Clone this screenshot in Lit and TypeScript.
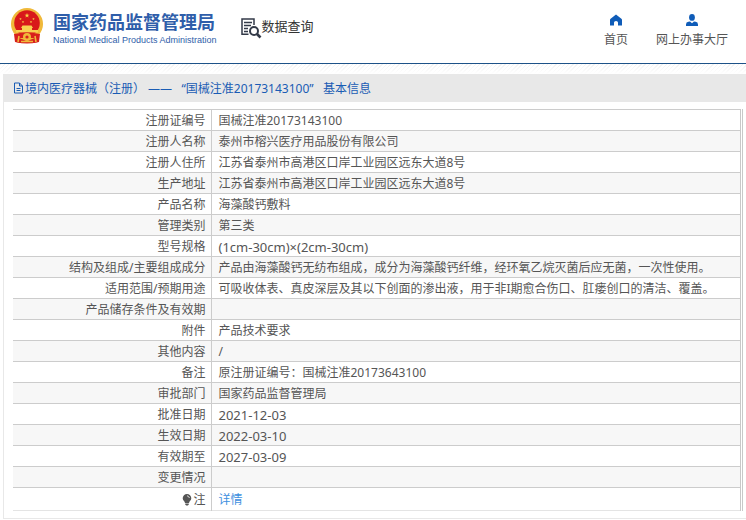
import { LitElement, html, svg, css, nothing } from "lit";
import { customElement } from "lit/decorators.js";

interface Row {
  label: string;
  value: string;
  figures?: boolean;
}

const rows: Row[] = [
  { label: "注册证编号", value: "国械注准20173143100" },
  { label: "注册人名称", value: "泰州市榕兴医疗用品股份有限公司" },
  { label: "注册人住所", value: "江苏省泰州市高港区口岸工业园区远东大道8号" },
  { label: "生产地址", value: "江苏省泰州市高港区口岸工业园区远东大道8号" },
  { label: "产品名称", value: "海藻酸钙敷料" },
  { label: "管理类别", value: "第三类" },
  { label: "型号规格", value: "(1cm-30cm)×(2cm-30cm)", figures: true },
  {
    label: "结构及组成/主要组成成分",
    value: "产品由海藻酸钙无纺布组成，成分为海藻酸钙纤维，经环氧乙烷灭菌后应无菌，一次性使用。",
  },
  {
    label: "适用范围/预期用途",
    value: "可吸收体表、真皮深层及其以下创面的渗出液，用于非I期愈合伤口、肛瘘创口的清洁、覆盖。",
  },
  { label: "产品储存条件及有效期", value: "" },
  { label: "附件", value: "产品技术要求" },
  { label: "其他内容", value: "/" },
  { label: "备注", value: "原注册证编号：国械注准20173643100" },
  { label: "审批部门", value: "国家药品监督管理局" },
  { label: "批准日期", value: "2021-12-03", figures: true },
  { label: "生效日期", value: "2022-03-10", figures: true },
  { label: "有效期至", value: "2027-03-09", figures: true },
  { label: "变更情况", value: "" },
];

const starPath = "M0-1 L.25-.31 .95-.31 .38.12 .59.81 0 .4 -.59.81 -.38.12 -.95-.31 -.25-.31Z";
const star = (x: number, y: number, s: number) =>
  svg`<path d=${starPath} fill="#f8d648" transform=${`translate(${x} ${y}) scale(${s})`}></path>`;

const emblem = html`<svg width="34" height="36" viewBox="0 0 34 36" aria-hidden="true">
  <path d="M5 24 L29 24 L28 34 Q17 37 6 34Z" fill="#d8201c"></path>
  <circle cx="17" cy="16" r="16" fill="#f0b93a"></circle>
  <circle cx="17" cy="15" r="12.8" fill="#d8181a"></circle>
  ${star(17, 7.5, 2.6)} ${star(10.5, 11, 1.3)} ${star(23.5, 11, 1.3)}
  ${star(13, 14, 1.3)} ${star(21, 14, 1.3)}
  <path d="M11 20 L12.5 17.5 H21.5 L23 20 H22 V22 H28 V24.5 H6 V22 H12 V20Z" fill="#f8d050"></path>
  <path d="M4 26 Q17 23 30 26 L29 34 L24 35 V30 H10 V35 L5 34Z" fill="#d8201c"></path>
  <circle cx="17" cy="29" r="4" fill="#f0b93a"></circle>
  <circle cx="17" cy="29" r="1.6" fill="#d8201c"></circle>
  <path d="M9 28 L8 34 M25 28 L26 34 M11 33.5 H23" stroke="#f0b93a" stroke-width="1.6" fill="none"></path>
</svg>`;

const searchDoc = html`<svg width="21" height="21" viewBox="0 0 21 21" fill="none" stroke="#333a48" aria-hidden="true">
  <path d="M7.5 16.2 H1 V1 H13 V7" stroke-width="1.5"></path>
  <path d="M3 4.5 H11 M3 7.5 H10 M3 10.5 H7 M3 13.5 H7" stroke-width="1.3"></path>
  <circle cx="13" cy="13" r="4" stroke-width="2"></circle>
  <path d="M16 16 L19.5 19.5" stroke-width="2.6"></path>
</svg>`;

const house = html`<svg width="12" height="11" viewBox="0 0 12 11" fill="#0f5cb8" aria-hidden="true">
  <path d="M6 0 L11.4 4.2 Q12 4.7 12 5.4 V11 H8 V8 Q8 6.5 6 6.5 Q4 6.5 4 8 V11 H0 V5.4 Q0 4.7 .6 4.2Z"></path>
</svg>`;

const person = html`<svg width="12" height="12" viewBox="0 0 12 12" fill="#0f5cb8" aria-hidden="true">
  <ellipse cx="6" cy="3.4" rx="2.9" ry="3.4"></ellipse>
  <path d="M0 12 V10.4 Q0 8.2 2.4 7.8 L4 7.4 L6 9.2 L8 7.4 L9.6 7.8 Q12 8.2 12 10.4 V12Z"></path>
</svg>`;

const page = html`<svg width="11" height="12" viewBox="0 0 11 12" fill="none" stroke="#1a5cb4" aria-hidden="true">
  <path d="M1.5 1 H6.5 L9.5 4 V11 H1.5Z M6.5 1 V4 H9.5 M3.5 6.5 H7.5 M3.5 8.5 H7.5"></path>
</svg>`;

const bulb = html`<svg width="10" height="12" viewBox="0 0 10 12" aria-hidden="true">
  <path d="M5 0 A4.3 4.3 0 0 1 9.3 4.3 C9.3 6.5 7.2 7.3 7 9 H3 C2.8 7.3 .7 6.5 .7 4.3 A4.3 4.3 0 0 1 5 0Z" fill="#555"></path>
  <path d="M3.3 9.5 H6.7 V10.6 L5.8 11.6 H4.2 L3.3 10.6Z" fill="#555"></path>
  <path d="M5 1.8 Q7 2 7.4 4" stroke="#ddd" fill="none"></path>
</svg>`;

@customElement("app-root")
export class AppRoot extends LitElement {
  static styles = css`
    :host {
      display: block;
      background: #fff;
      color: #555;
      font: 12px/20px "Noto Sans", "Noto Sans CJK SC", sans-serif;
    }
    a {
      text-decoration: none;
      color: inherit;
    }
    svg {
      display: block;
      flex: none;
    }
    .top {
      display: flex;
      align-items: flex-start;
      height: 64px;
      box-sizing: border-box;
      padding: 8px 18px 0 10px;
      border-bottom: 1px solid #1d5288;
      white-space: nowrap;
    }
    .brand {
      display: flex;
      gap: 9px;
      color: #2f5eaa;
    }
    .name {
      margin: 0;
      font-size: 18px;
      line-height: 28px;
      font-weight: 700;
    }
    .english {
      margin: 0;
      font: 9px/8px "Liberation Sans", sans-serif;
    }
    .section {
      display: flex;
      margin-left: 24px;
      padding-top: 8px;
      font-size: 13px;
      color: #333;
    }
    .section svg {
      margin-top: 2px;
    }
    .links {
      display: flex;
      gap: 28px;
      margin-left: auto;
      padding-top: 6px;
    }
    .link {
      display: flex;
      flex-direction: column;
      align-items: center;
      gap: 4px;
    }
    .link svg {
      height: 12px;
    }
    .band {
      height: 10px;
      background: repeating-linear-gradient(135deg, #f2f2f2 0 1px, #fff 1px 3px);
      mask-image: linear-gradient(#000, transparent);
    }
    .panel {
      margin-left: 3px;
      border-left: 1px solid #e8e8e8;
      border-bottom: 1px solid #e8e8e8;
    }
    .title {
      display: flex;
      align-items: center;
      gap: 1px;
      margin: 0;
      height: 28px;
      padding-left: 9px;
      background: #e8e8e8;
      color: #1a5cb4;
      font-size: 12px;
      font-weight: 400;
      line-height: 20px;
      white-space: pre;
    }
    .title span {
      padding-top: 2px;
    }
    .body {
      padding: 7px 3px 7px 9px;
    }
    .frame {
      border-right: 3px double #c8c8c8;
    }
    .data {
      width: 100%;
      border-collapse: collapse;
      table-layout: fixed;
      border-top: 1px solid #ccc;
      border-bottom: 1px solid #e4e4e4;
      line-height: 18px;
    }
    .label-col {
      width: 198px;
    }
    tr + tr {
      border-top: 1px solid #ccc;
    }
    tr:nth-child(even) {
      background: #f7f7f7;
    }
    th,
    td {
      height: 18px;
      padding: 2px 5px 0 7px;
      font-weight: 400;
    }
    th {
      border-right: 1px solid #ccc;
      text-align: right;
    }
    td {
      text-align: left;
      white-space: nowrap;
    }
    .figures {
      font-size: 13px;
    }
    .last th,
    .last td {
      height: 20px;
    }
    .note {
      display: flex;
      justify-content: flex-end;
      align-items: center;
      gap: 1px;
    }
    .detail {
      color: #3d8fe0;
    }
  `;

  render() {
    return html`
      <header class="top">
        <a class="brand" href="#">
          ${emblem}
          <div>
            <p class="name">国家药品监督管理局</p>
            <p class="english">National Medical Products Administration</p>
          </div>
        </a>
        <a class="section" href="#">${searchDoc}<span>数据查询</span></a>
        <nav class="links">
          <a class="link" href="#">${house}<span>首页</span></a>
          <a class="link" href="#">${person}<span>网上办事大厅</span></a>
        </nav>
      </header>
      <div class="band"></div>
      <main class="panel">
        <h1 class="title">${page}<span>境内医疗器械（注册） ——   “国械注准20173143100”   基本信息</span></h1>
        <div class="body">
          <div class="frame">
            <table class="data">
              <colgroup>
                <col class="label-col" />
                <col />
              </colgroup>
              <tbody>
                ${rows.map(
                  (row) => html`<tr>
                    <th scope="row">${row.label}</th>
                    <td class=${row.figures ? "figures" : nothing}>${row.value || nothing}</td>
                  </tr>`,
                )}
                <tr class="last">
                  <th scope="row"><span class="note">${bulb}注</span></th>
                  <td><a class="detail" href="#">详情</a></td>
                </tr>
              </tbody>
            </table>
          </div>
        </div>
      </main>
    `;
  }
}
